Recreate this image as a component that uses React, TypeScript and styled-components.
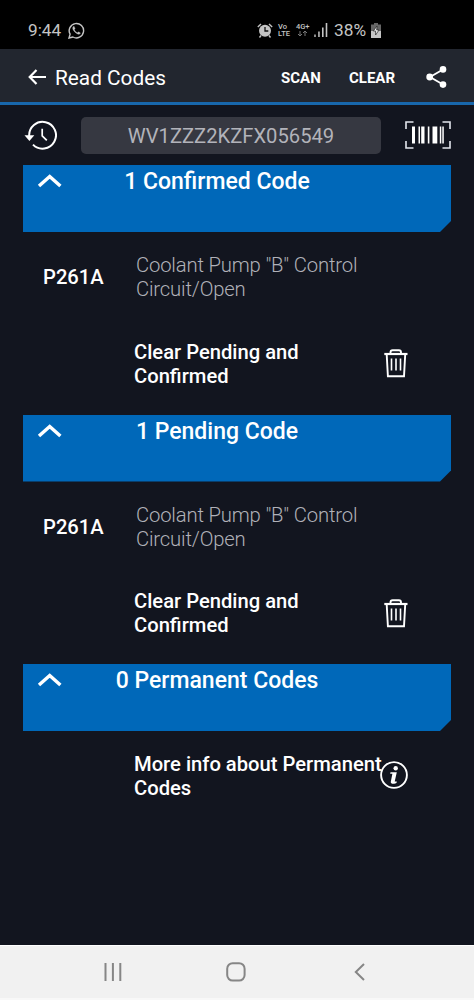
import React from "react";
import styled, { createGlobalStyle } from "styled-components";

const GlobalStyle = createGlobalStyle`
  * { box-sizing: border-box; }
  body { margin: 0; background: #12151f; }
  svg { display: block; flex: none; }
`;

const Screen = styled.div`
  width: 474px;
  height: 1000px;
  display: flex;
  flex-direction: column;
  overflow: hidden;
  background: #12151f;
  color: #fff;
  font-family: Roboto, "Liberation Sans", sans-serif;
`;

const StatusBar = styled.header`
  height: 49px;
  padding: 11px 93px 0 28px;
  display: flex;
  align-items: center;
  background: #000;
  color: #c4c4c4;
`;

const StatusText = styled.span<{ $size: number; $width: number }>`
  width: ${(p) => p.$width}px;
  font-size: ${(p) => p.$size}px;
  line-height: 20px;
  white-space: nowrap;
`;

const StatusIcons = styled.div`
  margin-left: auto;
  display: flex;
  align-items: center;
`;

const StackLabel = styled.div<{ $width: number; $gap: number }>`
  width: ${(p) => p.$width}px;
  margin-left: ${(p) => p.$gap}px;
  display: flex;
  flex-direction: column;
  font-size: 7.5px;
  font-weight: 500;
  line-height: 7px;
  white-space: nowrap;
`;

const Spacer = styled.i<{ $width: number }>`
  width: ${(p) => p.$width}px;
  flex: none;
`;

const AppBar = styled.nav`
  height: 56px;
  padding: 2px 27px 0 28px;
  display: flex;
  align-items: center;
  background: #22262f;
  border-bottom: 3px solid #1867ac;
`;

const PageTitle = styled.h1`
  margin: 2px 0 0 8px;
  flex: 1;
  font-size: 20.8px;
  font-weight: 400;
  line-height: 24px;
`;

const BarAction = styled.button<{ $width: number; $gap: number }>`
  width: ${(p) => p.$width}px;
  margin: 2px ${(p) => p.$gap}px 0 0;
  padding: 0;
  border: 0;
  background: none;
  color: #fff;
  font: 700 15px/20px Roboto, sans-serif;
  text-align: left;
  white-space: nowrap;
`;

const VinRow = styled.section`
  height: 60px;
  padding: 0 23px 0 24px;
  display: flex;
  align-items: center;
  justify-content: space-between;
`;

const VinField = styled.div`
  width: 300px;
  height: 37px;
  border-radius: 5px;
  background: #363841;
  color: #b2b3ba;
  font-size: 20.2px;
  line-height: 38px;
  text-align: center;
`;

const Group = styled.section`
  height: 249.5px;
  padding: 0 23px;
`;

const GroupHeader = styled.div`
  height: 67px;
  display: grid;
  grid-template-columns: 54px 280px;
  align-items: start;
  background: #0068b9;
  clip-path: polygon(0 0, 100% 0, 100% calc(100% - 11px), calc(100% - 11px) 100%, 0 100%);
  svg { margin: 8px 0 0 14px; }
`;

const GroupTitle = styled.h2`
  margin: 0;
  padding-top: 2px;
  font-size: 23px;
  font-weight: 500;
  line-height: 29px;
  text-align: center;
  white-space: nowrap;
`;

const CodeRow = styled.div`
  height: 90px;
  padding: 21px 0 0 20px;
  display: grid;
  grid-template-columns: 93px 250px;
`;

const Code = styled.strong`
  padding-top: 12px;
  font-size: 20.2px;
  font-weight: 500;
  line-height: 24.4px;
`;

const Description = styled.p`
  margin: 0;
  color: #b0b1b8;
  font-size: 20.3px;
  font-weight: 300;
  line-height: 24.4px;
  letter-spacing: -0.18px;
`;

const ActionRow = styled.div<{ $top: number }>`
  padding: ${(p) => p.$top}px 0 0 111px;
  display: flex;
`;

const ActionText = styled.p<{ $width: number }>`
  width: ${(p) => p.$width}px;
  margin: 0;
  font-size: 20.2px;
  font-weight: 500;
  line-height: 24.4px;
  white-space: pre;
`;

const ActionIcon = styled.div`
  padding-top: 9.5px;
`;

const SystemNav = styled.footer`
  height: 55px;
  margin-top: auto;
  padding: 0 109px 1px 104px;
  display: flex;
  align-items: center;
  background: #f1f1f1;
  border-top: 1px solid #fff;
  border-bottom: 2px solid #f8f8f8;
  svg:nth-child(2) { margin: 0 auto 0 104px; }
`;

const WhatsAppIcon = () => (
  <svg width="17" height="17" viewBox="0 0 17 17" fill="none" stroke="#c4c4c4">
    <path d="M1 16l1.1-3.8A7.2 7.2 0 1 1 4.9 15z" strokeWidth="1.4" />
    <path d="M5.3 4.5c-1.5 1.7.1 4.3 2 5.9 2.1 1.8 4.4 2.6 5.2.7L10.5 9.8l-.9 1C8 10.2 6.8 9 6.3 7.6l.8-.9-.9-2.3z" fill="#c4c4c4" strokeWidth=".3" />
  </svg>
);

const AlarmIcon = () => (
  <svg width="16" height="15" viewBox="0 0 16 15">
    <circle cx="8" cy="7.7" r="6" fill="#c4c4c4" />
    <path d="M.8 4L4 1M15.2 4L12 1M4 12.5l-1.5 2M12 12.5l1.5 2" stroke="#c4c4c4" strokeWidth="1.4" />
    <path d="M8 4v4h3.3" fill="none" stroke="#111" strokeWidth="1.3" />
  </svg>
);

const SignalIcon = () => (
  <svg width="14" height="14" viewBox="0 0 14 14" fill="#c4c4c4">
    <path d="M.3 11.5h1.4V14H.3zM4.2 8.5h1.5V14H4.200zM8 4.500h1.600V14H8z" />
    <path d="M11.7 0h1.6v14h-1.6z" />
  </svg>
);

const BatteryIcon = () => (
  <svg width="10" height="15" viewBox="0 0 10 15">
    <path d="M3 0h4v1.5h3V8H0V1.5h3z" fill="#666" />
    <path d="M0 8h10v7H0z" fill="#c4c4c4" />
    <path d="M6 3L2.3 8H4.600v4L8 7H5.700z" fill="#f0f0f0" stroke="#222" strokeWidth=".7" />
  </svg>
);

const BackIcon = () => (
  <svg width="19" height="16" viewBox="0 0 19 16" fill="none" stroke="#fff" strokeWidth="2.2">
    <path d="M8.500 1L1.700 8l6.800 7M1.700 8H18" />
  </svg>
);

const ShareIcon = () => (
  <svg width="21" height="22" viewBox="0 0 21 22" fill="#fff">
    <path d="M17 3.5L4 11l13 7.5" fill="none" stroke="#fff" strokeWidth="1.8" />
    <circle cx="3.7" cy="11" r="3.4" />
    <circle cx="17" cy="3.4" r="3.3" />
    <circle cx="17" cy="18.6" r="3.3" />
  </svg>
);

const HistoryIcon = () => (
  <svg width="33" height="30" viewBox="0 0 33 30" fill="none" stroke="#fff" strokeWidth="2">
    <path d="M5.2 16A13.4 13.4 0 1 1 9 24.6" />
    <path d="M18.2 8.8v7l4.6 4.6" strokeWidth="1.7" />
    <path d="M.5 15.3h9.8l-4.9 5.8z" fill="#fff" stroke="none" />
  </svg>
);

const BarcodeIcon = () => (
  <svg width="46" height="28" viewBox="0 0 46 28">
    <path d="M8.5 1H1v7M37.5 1H45v7M1 20v7h7.5M45 20v7h-7.5" fill="none" stroke="#e4e6ee" strokeWidth="1.6" />
    <path d="M7 5.5h3v17H7zM13.5 5.5h1.5v17h-1.5zM16.2 5.5h3.3v17h-3.3zM22.8 5.5h1.6v17h-1.6zM27.5 5.5h4.8v17h-4.8zM34.8 5.5h1.5v17h-1.5zM37.3 5.5h1.5v17h-1.5z" fill="#fff" />
  </svg>
);

const ChevronIcon = () => (
  <svg width="26" height="16" viewBox="0 0 26 16" fill="none" stroke="#fff" strokeWidth="3.4">
    <path d="M2 13.100L12.7 3.500l10.700 9.600" />
  </svg>
);

const TrashIcon = () => (
  <svg width="24" height="29" viewBox="0 0 24 29" fill="none" stroke="#fff">
    <path d="M.3 5h23.2" strokeWidth="2.2" />
    <path d="M6.5 4.5V3.500c0-1.500.8-2.300 2.100-2.300h6.300c1.300 0 2.100.8 2.100 2.300v1M2.7 5.500l1.200 21.800h16.100l1.200-21.800" strokeWidth="1.900" />
    <path d="M7.5 9.500v12M12 9.500v12M16.500 9.500v12" strokeWidth="1.600" />
  </svg>
);

const InfoIcon = () => (
  <svg width="28" height="28" viewBox="0 0 28 28">
    <circle cx="14" cy="14" r="12.900" fill="none" stroke="#fff" strokeWidth="1.900" />
    <circle cx="15.700" cy="7.200" r="2.200" fill="#fff" />
    <path d="M10.500 11.200h6.300l-2.100 9.300h2.100l-.2 1.300c-1.500 1.300-6.300 1.800-5.800-1l1.600-8h-2.200z" fill="#fff" />
  </svg>
);

const RecentsIcon = () => (
  <svg width="18" height="18" viewBox="0 0 18 18" stroke="#868686" strokeWidth="2">
    <path d="M1.500 0v18M8.900 0v18M16.300 0v18" />
  </svg>
);

const HomeIcon = () => (
  <svg width="20" height="20" viewBox="0 0 20 20" fill="none" stroke="#868686" strokeWidth="2">
    <rect x="1.200" y="1.200" width="17.400" height="17.400" rx="5.500" />
  </svg>
);

const NavBackIcon = () => (
  <svg width="11" height="18" viewBox="0 0 11 18" fill="none" stroke="#868686" strokeWidth="2">
    <path d="M10 1L1.800 9l8.200 8" />
  </svg>
);

type GroupProps = { title: string; code?: string; description?: string };

const CodeGroup = ({ title, code, description }: GroupProps) => (
  <Group>
    <GroupHeader>
      <ChevronIcon />
      <GroupTitle>{title}</GroupTitle>
    </GroupHeader>
    {code ? (
      <>
        <CodeRow>
          <Code>{code}</Code>
          <Description>{description}</Description>
        </CodeRow>
        <ActionRow $top={17.5}>
          <ActionText $width={250}>{"Clear Pending and\nConfirmed"}</ActionText>
          <ActionIcon><TrashIcon /></ActionIcon>
        </ActionRow>
      </>
    ) : (
      <ActionRow $top={20.5}>
        <ActionText $width={246}>{"More info about Permanent\nCodes"}</ActionText>
        <ActionIcon><InfoIcon /></ActionIcon>
      </ActionRow>
    )}
  </Group>
);

export default function App() {
  return (
    <Screen>
      <GlobalStyle />
      <StatusBar>
        <StatusText $size={17.2} $width={40}>9:44</StatusText>
        <WhatsAppIcon />
        <StatusIcons>
          <AlarmIcon />
          <StackLabel $width={12} $gap={5}><span>Vo</span><span>LTE</span></StackLabel>
          <StackLabel $width={14} $gap={6}>
            <span>4G+</span>
            <svg width="12" height="7" viewBox="0 0 12 7" fill="none" stroke="#777" strokeWidth="1">
              <path d="M4 1v5M2 4l2 2 2-2M9 6V1M7 3l2-2 2 2" />
            </svg>
          </StackLabel>
          <Spacer $width={4} />
          <SignalIcon />
          <Spacer $width={6} />
          <StatusText $size={17.3} $width={37}>38%</StatusText>
          <BatteryIcon />
        </StatusIcons>
      </StatusBar>
      <AppBar>
        <BackIcon />
        <PageTitle>Read Codes</PageTitle>
        <BarAction $width={40} $gap={28}>SCAN</BarAction>
        <BarAction $width={47} $gap={30}>CLEAR</BarAction>
        <ShareIcon />
      </AppBar>
      <VinRow>
        <HistoryIcon />
        <VinField>WV1ZZZ2KZFX056549</VinField>
        <BarcodeIcon />
      </VinRow>
      <CodeGroup title="1 Confirmed Code" code="P261A" description={'Coolant Pump "B" Control Circuit/Open'} />
      <CodeGroup title="1 Pending Code" code="P261A" description={'Coolant Pump "B" Control Circuit/Open'} />
      <CodeGroup title="0 Permanent Codes" />
      <SystemNav>
        <RecentsIcon />
        <HomeIcon />
        <NavBackIcon />
      </SystemNav>
    </Screen>
  );
}
